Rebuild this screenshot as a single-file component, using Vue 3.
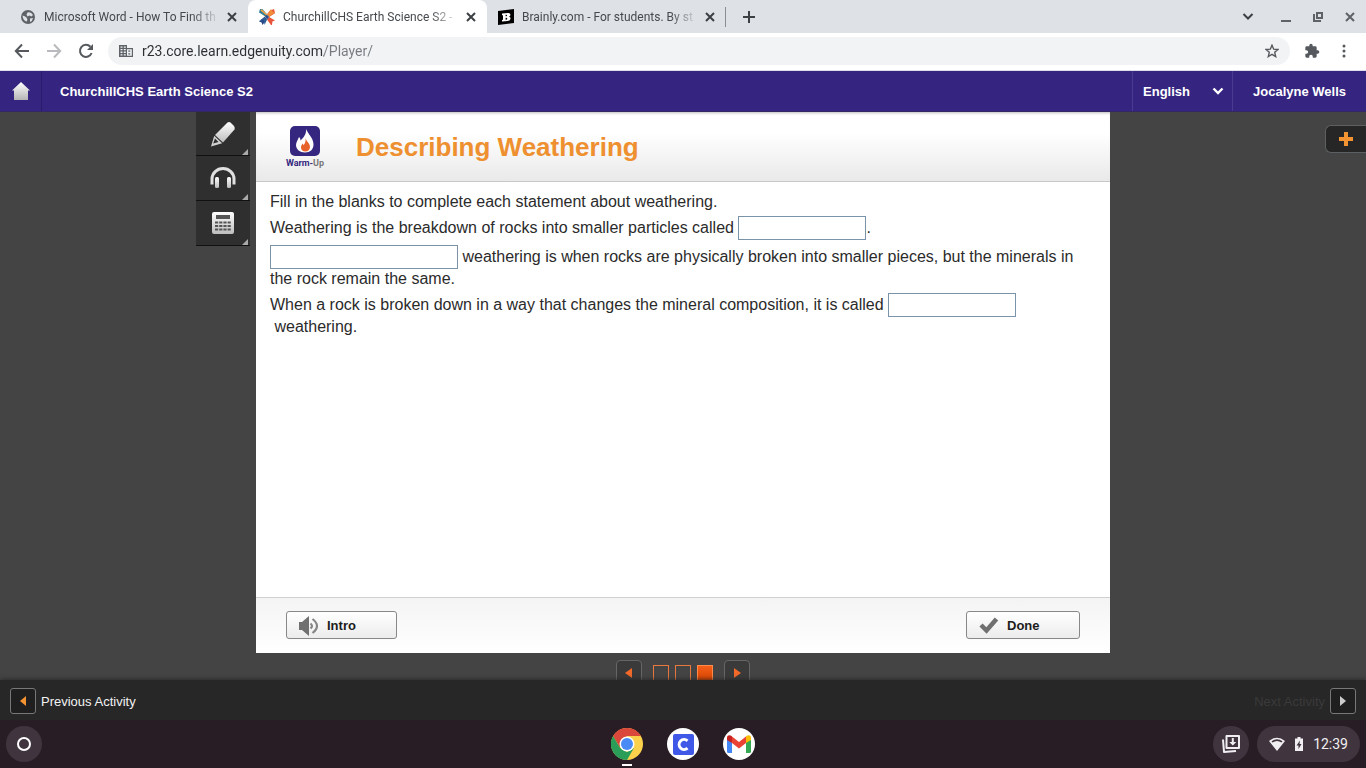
<template>
  <div class="screen">
    <div class="tab-strip">
      <div class="tabs">
        <div v-for="tab in tabs" :key="tab.title" :class="['tab', { active: tab.active }]">
          <svg v-if="tab.icon === 'globe'" class="favicon" viewBox="0 0 16 16">
            <circle cx="8" cy="8" r="7" fill="#5f6368" />
            <path d="M2.5 6.5Q5 7 6.500 8.500T7 12.500Q3 12 2.500 6.500zM7.500 3.500Q11 2.500 13 6L11.500 7.500 9.500 6.500 7.500 7.500 6.500 5.500zM10 9.500l3-.5q-.5 3-3 4z" fill="#dee1e6" />
          </svg>
          <svg v-else-if="tab.icon === 'edgenuity'" class="favicon" viewBox="0 0 16 16">
            <path d="M1 2.500 2.800 1 8 6l-1.800 2z" fill="#f0a03c" />
            <path d="M1 0h2.400L8.200 5.600 6.600 7.600 0 3.600z" fill="#2d7f9c" />
            <path d="M2.500 0 8.200 5.600 7.400 6.600 1.500 1.500z" fill="#f0a03c" />
            <path d="M15 0l-4.600 2L8 5.600l2 2.400 6-3.800z" fill="#e8553a" />
            <path d="M12 0l1.800 2.800L16 3.600 10.400 7.800 8.200 5.600z" fill="#f08c3a" />
            <path d="M0 12.600 5.600 7.800l2.400 2.600L3.400 16l-.8-2.600z" fill="#2b4a8c" />
            <path d="M0 12l4.600-1.600L5.600 16 8 10.400 6 8z" fill="#2d5f94" />
            <path d="M8 10.400 10.200 8l5.800 3.400-2.600 1L13 16h-1z" fill="#e8553a" />
            <path d="M6 7.600 8 5.800l2.200 2.200L8 10.400z" fill="#28508c" />
          </svg>
          <svg v-else class="favicon" viewBox="0 0 16 16">
            <path d="M0 2 16 0v14L0 16z" fill="#000" />
            <path fill-rule="evenodd" d="M4 4.600 10 4c3-.2 3 3 1 3.700 2.300.3 2 4-1.300 4.200L4 12.500V11l1-.2V6.300L4 6.300zM7.600 5.700v1.500c2 0 2-1.600 0-1.500zM7.600 8.700v2c2.200 0 2.200-2.200 0-2z" fill="#fff" />
          </svg>
          <span class="tab-title">{{ tab.title }}</span>
          <button class="icon-button tab-close" aria-label="Close tab">
            <svg width="10" height="10" viewBox="0 0 10 10"><path d="M1 1l8 8M9 1L1 9" stroke="#3c4043" stroke-width="2" /></svg>
          </button>
        </div>
      </div>
      <button class="icon-button new-tab" aria-label="New tab">
        <svg width="12" height="12" viewBox="0 0 12 12"><path d="M6 0v12M0 6h12" stroke="#3c4043" stroke-width="2" /></svg>
      </button>
      <div class="window-buttons">
        <button class="icon-button" aria-label="Search tabs">
          <svg width="12" height="12" viewBox="0 0 12 12"><path d="M1.500 3 6 7.500 10.500 3" fill="none" stroke="#3c4043" stroke-width="2" /></svg>
        </button>
        <button class="icon-button" aria-label="Minimize">
          <svg width="12" height="12" viewBox="0 0 12 12"><path d="M1 10h10" stroke="#5f6368" stroke-width="2" /></svg>
        </button>
        <button class="icon-button" aria-label="Restore">
          <svg width="12" height="12" viewBox="0 0 12 12"><path d="M5 2h5v5H5zM2 3v7h7" fill="none" stroke="#5f6368" stroke-width="2" /></svg>
        </button>
        <button class="icon-button" aria-label="Close">
          <svg width="12" height="12" viewBox="0 0 12 12"><path d="M2 2l8 8M10 2l-8 8" stroke="#5f6368" stroke-width="2" /></svg>
        </button>
      </div>
    </div>

    <div class="toolbar">
      <button class="icon-button" aria-label="Back">
        <svg width="16" height="16" viewBox="0 0 16 16"><path d="M15 8H2M8 1.500 1.800 8 8 14.500" fill="none" stroke="#55595d" stroke-width="2" /></svg>
      </button>
      <button class="icon-button" aria-label="Forward" disabled>
        <svg width="16" height="16" viewBox="0 0 16 16"><path d="M1 8h13M8 1.500 14.200 8 8 14.500" fill="none" stroke="#b8babd" stroke-width="2" /></svg>
      </button>
      <button class="icon-button" aria-label="Reload">
        <svg width="16" height="16" viewBox="0 0 16 16">
          <path d="M13.600 10A6 6 0 1 1 12.400 3.800" fill="none" stroke="#55595d" stroke-width="2" />
          <path d="M15 1v6H9z" fill="#55595d" />
        </svg>
      </button>
      <div class="omnibox">
        <svg width="14" height="12" viewBox="0 0 14 12">
          <path fill-rule="evenodd" d="M0 0h8v3h6v9H0zM1.500 1.500v1.300h2V1.500zM4.800 1.500v1.300h2V1.500zM1.500 4v1.300h2V4zM4.800 4v1.300h2V4zM1.500 6.600v1.300h2V6.600zM4.800 6.600v1.300h2V6.600zM1.500 9.200v1.300h2V9.200zM4.800 9.200v1.300h2V9.200zM8 4.200v6.600h4.800V4.200zM9.300 5.500h2v1.300h-2zM9.300 8.200h2v1.300h-2z" fill="#5f6368" />
        </svg>
        <input v-model="url" class="url" aria-label="Address" spellcheck="false" />
        <button class="icon-button" aria-label="Bookmark this page">
          <svg width="14" height="14" viewBox="0 0 14 14"><path d="M7 1.200 8.700 5.200 13 5.500 9.700 8.300 10.700 12.600 7 10.300 3.300 12.600 4.300 8.300 1 5.500 5.300 5.200z" fill="none" stroke="#55595d" stroke-width="1.400" /></svg>
        </button>
      </div>
      <button class="icon-button" aria-label="Extensions">
        <svg width="16" height="16" viewBox="0 0 24 24"><path d="M20.500 11H19V7a2 2 0 0 0-2-2h-4V3.500a2.500 2.500 0 0 0-5 0V5H4a2 2 0 0 0-2 2v3.800h1.500a2.700 2.700 0 0 1 0 5.400H2V20a2 2 0 0 0 2 2h3.800v-1.500a2.700 2.700 0 0 1 5.400 0V22H17a2 2 0 0 0 2-2v-4h1.500a2.500 2.500 0 0 0 0-5z" fill="#55595d" /></svg>
      </button>
      <button class="icon-button" aria-label="Menu">
        <svg width="16" height="16" viewBox="0 0 16 16" fill="#55595d"><circle cx="8" cy="3" r="1.500" /><circle cx="8" cy="8" r="1.500" /><circle cx="8" cy="13" r="1.500" /></svg>
      </button>
    </div>

    <header class="course-bar">
      <a href="#" class="home" aria-label="Home">
        <svg width="18" height="18" viewBox="0 0 18 18">
          <defs><linearGradient id="home" x2="0" y2="1"><stop stop-color="#fff" /><stop offset="1" stop-color="#b5b5b5" /></linearGradient></defs>
          <path d="M9 0l9 8.500h-2V18H2V8.500H0z" fill="url(#home)" />
        </svg>
      </a>
      <span class="course-name">ChurchillCHS Earth Science S2</span>
      <label class="language">
        <select v-model="language" aria-label="Language">
          <option>English</option>
          <option>Español</option>
        </select>
        <svg width="12" height="8" viewBox="0 0 12 8"><path d="M1.500 1.500 6 6l4.500-4.500" fill="none" stroke="#fff" stroke-width="2.400" /></svg>
      </label>
      <a href="#" class="user">Jocalyne Wells</a>
    </header>

    <main class="stage">
      <div class="tools">
        <button class="tool" aria-label="Highlighter">
          <svg width="26" height="26" viewBox="0 0 26 26">
            <defs><linearGradient id="metal" x2="0" y2="1"><stop stop-color="#fff" /><stop offset="1" stop-color="#bdbdbd" /></linearGradient></defs>
            <path d="M17.500 1.500q1.500-1 3 0L24 5q1.200 1.500.5 3.500L13 21.500 5 14z" fill="url(#metal)" />
            <path fill-rule="evenodd" d="M4.200 14.800l8 7.500L1 25.500zM5 17.500l-1.800 5L8.500 21z" fill="#d0d0d0" />
          </svg>
        </button>
        <button class="tool" aria-label="Audio">
          <svg width="26" height="22" viewBox="0 0 26 22">
            <path d="M3.500 16H2V12a11 10.500 0 0 1 22 0v4h-1.500" fill="none" stroke="#e0e0e0" stroke-width="3" />
            <rect x="5" y="10" width="4" height="11" rx="1.500" fill="url(#metal)" />
            <rect x="17" y="10" width="4" height="11" rx="1.500" fill="url(#metal)" />
          </svg>
        </button>
        <button class="tool" aria-label="Calculator">
          <svg width="22" height="22" viewBox="0 0 22 22">
            <rect width="22" height="22" rx="2" fill="url(#metal)" />
            <path d="M4 3h14v4H4z" fill="#555" />
            <path d="M3 10.500h16M3 14h16M3 17.500h16" stroke="#555" stroke-width="2" stroke-dasharray="3.200 1" />
          </svg>
        </button>
      </div>

      <div class="center">
        <section class="activity">
          <div class="activity-header">
            <div class="warm-up">
              <svg width="30" height="30" viewBox="0 0 30 30">
                <rect width="30" height="30" rx="5" fill="#35277f" />
                <path d="M16 3c2 5 7.500 9 7.500 15.500 0 5-3.500 8-8.500 8s-9-3-9-7.500c0-3 2-5 3-8 1 1 1.500 2 1.500 3.500C14 11 16.500 8 16 3z" fill="#fff" />
                <path d="M15.500 12c1 4 4.500 5 4.500 9 0 2.500-2 4.500-4.500 4.500S11 24 11 21.500c0-2 1-2.500 1.500-4 .6.500.9 1 1 1.800 1.500-1.800 2.500-4 2-7.300z" fill="#e8622c" />
              </svg>
              <span>Warm-<i>Up</i></span>
            </div>
            <h1>Describing Weathering</h1>
          </div>

          <div class="question">
            <p>Fill in the blanks to complete each statement about weathering.</p>
            <p class="end-blank">Weathering is the breakdown of rocks into smaller particles called <input v-model="answers.sediment" class="blank" aria-label="Smaller particles" />.</p>
            <p><input v-model="answers.mechanical" class="blank wide" aria-label="Type of weathering that breaks rocks physically" /> weathering is when rocks are physically broken into smaller pieces, but the minerals in the rock remain the same.</p>
            <p>When a rock is broken down in a way that changes the mineral composition, it is called <input v-model="answers.chemical" class="blank" aria-label="Type of weathering that changes composition" /> &nbsp;weathering.</p>
          </div>

          <div class="activity-footer">
            <button class="action">
              <svg width="21" height="20" viewBox="0 0 21 20">
                <path d="M1 6h3l7-6v20l-7-6H1z" fill="#707070" />
                <path d="M12.500 7.500q3 2.500 0 5M14.500 3q9 7 0 14" fill="none" stroke="#858585" stroke-width="2.200" />
              </svg>
              Intro
            </button>
            <button class="action done">
              <svg width="21" height="18" viewBox="0 0 21 18"><path d="M3 8l5.500 5.500L18.500 2" fill="none" stroke="#707070" stroke-width="4.500" /></svg>
              Done
            </button>
          </div>
        </section>

        <nav class="pager" aria-label="Frames">
          <button class="pager-arrow" aria-label="Previous frame">
            <svg width="8" height="10" viewBox="0 0 8 10"><path d="M7 0v10L0 5z" fill="#f26a2a" /></svg>
          </button>
          <div class="frames">
            <button v-for="n in 3" :key="n" :class="['frame', { current: n === frame }]" :aria-label="'Frame ' + n" @click="frame = n"></button>
          </div>
          <button class="pager-arrow" aria-label="Next frame">
            <svg width="8" height="10" viewBox="0 0 8 10"><path d="M1 0v10l7-5z" fill="#f26a2a" /></svg>
          </button>
        </nav>
      </div>

      <div class="side">
        <button class="expand" aria-label="Open panel">
          <svg width="14" height="14" viewBox="0 0 14 14"><path d="M5 0h4v5h5v4H9v5H5V9H0V5h5z" fill="#f49332" /></svg>
        </button>
      </div>
    </main>

    <nav class="activity-nav" aria-label="Activities">
      <button class="nav-link">
        <span class="nav-box"><svg width="6" height="10" viewBox="0 0 6 10"><path d="M6 0v10L0 5z" fill="#f49332" /></svg></span>
        Previous Activity
      </button>
      <button class="nav-link next" disabled>
        Next Activity
        <span class="nav-box"><svg width="6" height="10" viewBox="0 0 6 10"><path d="M0 0v10l6-5z" fill="#ccc" /></svg></span>
      </button>
    </nav>

    <footer class="shelf">
      <button class="round" aria-label="Launcher"><span class="ring"></span></button>
      <div class="apps">
        <button class="app running" aria-label="Chrome">
          <svg width="32" height="32" viewBox="0 0 32 32">
            <circle cx="16" cy="16" r="16" fill="#fbd14b" />
            <path d="M2.140 8A16 16 0 0 1 29.860 8H16L9.100 20z" fill="#d9483b" />
            <path d="M2.140 8 9.100 20 16 24l6.900-4L16 32A16 16 0 0 1 2.140 8z" fill="#2a9d58" />
            <circle cx="16" cy="16" r="7.500" fill="#fff" />
            <circle cx="16" cy="16" r="6" fill="#4a8af4" />
          </svg>
        </button>
        <button class="app" aria-label="Clever">
          <svg width="32" height="32" viewBox="0 0 32 32">
            <circle cx="16" cy="16" r="16" fill="#fff" />
            <rect x="6" y="6" width="21" height="21" rx="2" fill="#4058e8" />
            <path d="M20.500 12.800a5 5 0 1 0 0 7.400" fill="none" stroke="#fff" stroke-width="3" />
          </svg>
        </button>
        <button class="app" aria-label="Gmail">
          <svg width="32" height="32" viewBox="0 0 32 32">
            <circle cx="16" cy="16" r="16" fill="#fff" />
            <path d="M4 11l5 3.500V25H5.500Q4 25 4 23.500z" fill="#4285f4" />
            <path d="M28 11l-5 3.500V25h3.500q1.500 0 1.500-1.500z" fill="#34a853" />
            <path d="M9 8.500l7 5.500 7-5.500v6.500L16 20.500 9 15z" fill="#ea4335" />
            <path d="M4 12V9.500C4 7 7 6.500 8.500 8l.5.500V15z" fill="#c5221f" />
            <path d="M28 12V9.500C28 7 25 6.500 23.500 8l-.5.500V15z" fill="#fbbc04" />
          </svg>
        </button>
      </div>
      <div class="status">
        <button class="round" aria-label="Downloads">
          <svg width="20" height="20" viewBox="0 0 20 20">
            <path d="M5.500 2H18v12H5.500z" fill="none" stroke="#f1eef1" stroke-width="2" stroke-linejoin="round" />
            <path d="M2 5.500l1 12.500 12-1" fill="none" stroke="#f1eef1" stroke-width="2" stroke-linejoin="round" />
            <path d="M10.800 4h2v4h2.500l-3.500 3.500L8.300 8h2.500z" fill="#f1eef1" />
          </svg>
        </button>
        <button class="tray">
          <svg width="16" height="14" viewBox="0 0 16 14"><path d="M0 4q8-6.500 16 0L8 14zM2.500 4.300l1 1.200q4.500-3 9 0l1-1.200q-5.500-4-11 0z" fill="#f1eef1" fill-rule="evenodd" /></svg>
          <svg width="8" height="14" viewBox="0 0 8 14"><path d="M2.500 0h3v1.500H8V14H0V1.500h2.500zM5 3.500 1.500 8.500h2v3.500L6.500 7h-2z" fill="#f1eef1" fill-rule="evenodd" /></svg>
          <span>12:39</span>
        </button>
      </div>
    </footer>
  </div>
</template>

<script setup>
import { ref, reactive } from 'vue'

const tabs = [
  { title: 'Microsoft Word - How To Find th', icon: 'globe', active: false },
  { title: 'ChurchillCHS Earth Science S2 -', icon: 'edgenuity', active: true },
  { title: 'Brainly.com - For students. By st', icon: 'brainly', active: false }
]

const url = ref('r23.core.learn.edgenuity.com/Player/')
const language = ref('English')
const frame = ref(3)
const answers = reactive({ sediment: '', mechanical: '', chemical: '' })
</script>

<style>
body {
  margin: 0;
}
</style>

<style scoped>
.screen {
  display: flex;
  flex-direction: column;
  height: 100vh;
  overflow: hidden;
  background: #444;
  font-family: "Liberation Sans", Arial, sans-serif;
}

.screen * {
  box-sizing: border-box;
}

button {
  padding: 0;
  border: none;
  background: none;
  font-family: inherit;
  cursor: pointer;
}

svg {
  display: block;
  flex: none;
}

.icon-button {
  display: flex;
  align-items: center;
  justify-content: center;
  width: 16px;
  height: 16px;
  flex: none;
}

.tab-strip {
  display: flex;
  align-items: center;
  height: 33px;
  padding: 0 8px 0 9px;
  background: #dee1e6;
}

.tabs {
  display: flex;
  height: 100%;
}

.tab {
  display: flex;
  align-items: center;
  width: 239px;
  padding: 0 8px 0 11px;
  font-family: Roboto, sans-serif;
  font-size: 12px;
  color: #45494d;
}

.tab.active {
  background: #fff;
  border-radius: 8px 8px 0 0;
}

.favicon {
  width: 16px;
  height: 16px;
}

.tab-title {
  flex: 1;
  min-width: 0;
  margin: 0 4px 0 8px;
  white-space: nowrap;
  mask-image: linear-gradient(to left, transparent, #000 28px);
}

.new-tab {
  width: 32px;
  margin-left: -1px;
  padding-left: 14px;
  border-left: 1px solid #8a8d91;
  box-sizing: content-box;
  height: 20px;
}

.new-tab {
  box-sizing: border-box;
}

.window-buttons {
  display: flex;
  gap: 16px;
  margin-left: auto;
}

.window-buttons .icon-button:first-child {
  margin-right: 6px;
}

.toolbar {
  display: flex;
  align-items: center;
  gap: 16px;
  height: 38px;
  padding: 0 14px 1px;
  background: #fff;
  border-bottom: 1px solid #dcdde8;
}

.omnibox {
  display: flex;
  align-items: center;
  flex: 1;
  gap: 9px;
  height: 28px;
  margin: 0 -2px;
  padding: 0 10px 0 11px;
  border-radius: 14px;
  background: #f1f3f4;
}

.url {
  flex: 1;
  min-width: 0;
  padding: 0;
  border: none;
  outline: none;
  font: 14px Roboto, sans-serif;
  color: transparent;
  background: linear-gradient(to right, #2c2f32 182px, #777b80 182px);
  background-clip: text;
}

.course-bar {
  display: flex;
  align-items: stretch;
  height: 41px;
  background: #352480;
  border-bottom: 1px solid #332866;
  color: #fff;
  font-size: 13px;
  font-weight: bold;
  line-height: 41px;
}

.home {
  display: flex;
  align-items: center;
  justify-content: center;
  width: 42px;
  border-right: 1px solid #2a1c6b;
}

.course-name {
  flex: 1;
  padding-left: 18px;
}

.language {
  display: flex;
  align-items: center;
  justify-content: space-between;
  width: 100px;
  padding: 0 8px 0 10px;
  border-left: 1px solid #4a3a92;
}

.language select {
  appearance: none;
  padding: 0;
  border: none;
  background: transparent;
  color: #fff;
  font: inherit;
}

.user {
  padding: 0 20px;
  border-left: 1px solid #4a3a92;
  color: #fff;
  text-decoration: none;
}

.stage {
  display: grid;
  grid-template-columns: 256px minmax(0, 1fr) 256px;
  flex: 1;
  min-height: 0;
  background: #444;
}

.tools {
  display: flex;
  flex-direction: column;
  align-items: flex-end;
  padding-right: 6px;
}

.tool {
  display: flex;
  align-items: center;
  justify-content: center;
  position: relative;
  width: 54px;
  height: 45px;
  background: #2f2f2f;
  border-bottom: 1px solid #111;
}

.tool:first-child {
  height: 44px;
}

.tool::after {
  content: "";
  position: absolute;
  right: 2px;
  bottom: 0;
  border: 3px solid transparent;
  border-right-color: #aaa;
  border-bottom-color: #aaa;
}

.center {
  display: flex;
  flex-direction: column;
  min-height: 0;
}

.activity {
  display: flex;
  flex-direction: column;
  flex: 1;
  background: #fff;
}

.activity-header {
  display: flex;
  align-items: center;
  height: 70px;
  padding-left: 30px;
  border-bottom: 1px solid #c8c8c8;
  background: linear-gradient(#fff 30%, #e9e9e9);
  box-shadow: inset 0 3px 3px -2px #bbb;
}

.warm-up {
  display: flex;
  flex-direction: column;
  align-items: center;
  gap: 2px;
  width: 38px;
  margin-right: 32px;
  color: #35277f;
  font: bold 9px/10px Roboto, sans-serif;
  white-space: nowrap;
}

.warm-up i {
  color: #777;
  font-style: normal;
}

h1 {
  margin: 0;
  color: #ee9030;
  font-size: 26px;
  line-height: 30px;
}

.question {
  flex: 1;
  padding: 9px 14px;
  color: #2b2b2b;
  font-size: 16px;
  line-height: 22px;
}

.question p {
  margin: 0 0 4px;
}

.question .end-blank {
  margin-bottom: 7px;
}

.blank {
  width: 128px;
  height: 24px;
  margin: -1px 0;
  padding: 0 4px;
  border: 1px solid #7b93a9;
  background: #fff;
  font: inherit;
  vertical-align: top;
}

.blank.wide {
  width: 188px;
}

.activity-footer {
  display: flex;
  align-items: center;
  justify-content: space-between;
  height: 56px;
  padding: 0 30px 2px;
  border-top: 1px solid #d0d0d0;
  background: linear-gradient(#f4f4f4, #fff);
}

.action {
  display: flex;
  align-items: center;
  gap: 8px;
  width: 111px;
  height: 28px;
  padding: 2px 0 0 11px;
  border: 1px solid #888;
  border-radius: 3px;
  background: linear-gradient(#fff, #ececec);
  color: #1c1c1c;
  font-size: 13px;
  font-weight: bold;
}

.action.done {
  width: 114px;
}

.pager {
  display: flex;
  justify-content: center;
  gap: 11px;
  height: 27px;
  padding-top: 7px;
  overflow: hidden;
}

.pager-arrow {
  display: flex;
  align-items: center;
  justify-content: center;
  width: 26px;
  height: 26px;
  border: 1px solid #666;
  border-radius: 4px;
  background: #3a3a3a;
}

.frames {
  display: flex;
  gap: 6px;
  padding-top: 5px;
}

.frame {
  width: 16px;
  height: 16px;
  border: 1px solid #e8783c;
}

.frame.current {
  border-color: #ff8a4a;
  background: linear-gradient(#f4601a, #d94400);
}

.side {
  display: flex;
  justify-content: flex-end;
  align-items: flex-start;
  padding-top: 13px;
}

.expand {
  display: flex;
  align-items: center;
  justify-content: center;
  width: 41px;
  height: 28px;
  border: 1px solid #5d6063;
  border-right: none;
  border-radius: 6px 0 0 6px;
  background: #262626;
}

.activity-nav {
  display: flex;
  align-items: center;
  justify-content: space-between;
  position: relative;
  height: 40px;
  padding: 2px 10px 0;
  background: #272727;
  box-shadow: 0 0 5px #222;
}

.nav-link {
  display: flex;
  align-items: center;
  gap: 5px;
  color: #f2f2f2;
  font-size: 13px;
}

.nav-link.next {
  color: #3a3a3a;
}

.nav-box {
  display: flex;
  align-items: center;
  justify-content: center;
  width: 26px;
  height: 26px;
  border: 1px solid #777;
  border-radius: 3px;
  background: #1f1f1f;
}

.shelf {
  display: grid;
  grid-template-columns: 1fr auto 1fr;
  align-items: center;
  position: relative;
  height: 48px;
  padding: 0 6px;
  background: #281c25;
}

.round {
  display: flex;
  align-items: center;
  justify-content: center;
  width: 36px;
  height: 36px;
  border-radius: 50%;
  background: #40353f;
}

.ring {
  width: 14px;
  height: 14px;
  border: 2px solid #fff;
  border-radius: 50%;
}

.apps {
  display: flex;
  gap: 24px;
}

.app {
  position: relative;
}

.app.running::after {
  content: "";
  position: absolute;
  left: 11px;
  bottom: -6px;
  width: 10px;
  height: 2px;
  background: #fff;
}

.status {
  display: flex;
  justify-content: flex-end;
  gap: 8px;
}

.tray {
  display: flex;
  align-items: center;
  gap: 10px;
  height: 36px;
  padding: 0 12px;
  border-radius: 18px;
  background: #40353f;
  color: #f1eef1;
  font: 14px Roboto, sans-serif;
}
</style>
